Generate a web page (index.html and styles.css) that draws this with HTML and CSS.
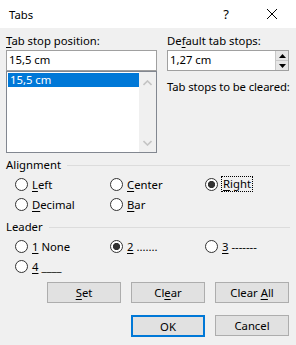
FILE: index.html
```html
<!DOCTYPE html>
<html>
<head>
    <meta charset="UTF-8">
    <title>Tabs</title>
    <link rel="stylesheet" href="styles.css">
</head>
<body>
    <div class="dialog">
        <div class="titlebar">
            <span class="title">Tabs</span>
            <span class="help">?</span>
            <svg class="close" width="12" height="12" viewBox="0 0 12 12">
                <path d="M1 1 L11 11 M11 1 L1 11" stroke="#000" stroke-width="1" fill="none"/>
            </svg>
        </div>
        <div class="content">
            <div class="top">
                <div class="col">
                    <div class="label"><u>T</u>ab stop position:</div>
                    <div class="field">15,5 cm</div>
                    <div class="list">
                        <div class="list-items">
                            <div class="item selected">15,5 cm</div>
                        </div>
                        <div class="scrollbar">
                            <svg width="9" height="6" viewBox="0 0 9 6"><path d="M0.5 5 L4.5 1 L8.5 5" stroke="#c4c4c4" stroke-width="1.6" fill="none"/></svg>
                            <svg width="9" height="6" viewBox="0 0 9 6"><path d="M0.5 1 L4.5 5 L8.5 1" stroke="#c4c4c4" stroke-width="1.6" fill="none"/></svg>
                        </div>
                    </div>
                </div>
                <div class="col">
                    <div class="label">De<u>f</u>ault tab stops:</div>
                    <div class="field spin">
                        <span class="spin-text">1,27 cm</span>
                        <div class="spin-buttons">
                            <div class="spin-btn"><svg width="7" height="4" viewBox="0 0 7 4"><path d="M0 4 L3.5 0 L7 4 Z" fill="#000"/></svg></div>
                            <div class="spin-btn"><svg width="7" height="4" viewBox="0 0 7 4"><path d="M0 0 L3.5 4 L7 0 Z" fill="#000"/></svg></div>
                        </div>
                    </div>
                    <div class="label cleared">Tab stops to be cleared:</div>
                </div>
            </div>

            <div class="group-title">Alignment</div>
            <div class="radios">
                <div class="opt"><span class="radio"></span><u>L</u>eft</div>
                <div class="opt"><span class="radio"></span><u>C</u>enter</div>
                <div class="opt"><span class="radio checked"></span><span class="focus"><u>R</u>ight</span></div>
                <div class="opt"><span class="radio"></span><u>D</u>ecimal</div>
                <div class="opt"><span class="radio"></span><u>B</u>ar</div>
            </div>

            <div class="group-title leader">Leader</div>
            <div class="radios">
                <div class="opt"><span class="radio"></span><u>1</u>&nbsp;None</div>
                <div class="opt"><span class="radio checked"></span><u>2</u>&nbsp;.......</div>
                <div class="opt"><span class="radio"></span><u>3</u>&nbsp;-------</div>
                <div class="opt"><span class="radio"></span><u>4</u>&nbsp;____</div>
            </div>

            <div class="buttons">
                <button><u>S</u>et</button>
                <button>Cl<u>e</u>ar</button>
                <button>Clear <u>A</u>ll</button>
            </div>
            <div class="buttons last">
                <button class="default">OK</button>
                <button>Cancel</button>
            </div>
        </div>
    </div>
</body>
</html>
```

FILE: styles.css
```css
body {
    margin: 0;
    padding: 0;
    font-family: "Noto Sans", "Open Sans", sans-serif;
    font-size: 11.3px;
    color: #000;
}
u {
    text-decoration-thickness: 1px;
    text-underline-offset: 2px;
}
.dialog {
    width: 296px;
    height: 345px;
    background-color: #f0f0f0;
    overflow: hidden;
}
.titlebar {
    height: 28px;
    background-color: #fff;
    display: flex;
    align-items: center;
}
.title {
    margin-left: 9px;
    flex: 1;
}
.help {
    font-size: 13px;
    margin-right: 37px;
}
.close {
    margin-right: 18px;
}
.content {
    padding: 5px 7px 0 6px;
}
.top {
    display: grid;
    grid-template-columns: 151px 122px;
    column-gap: 10px;
}
.col {
    display: flex;
    flex-direction: column;
}
.label {
    line-height: 16px;
    height: 16px;
    margin-bottom: 1px;
    white-space: nowrap;
}
.field {
    height: 21px;
    box-sizing: border-box;
    background-color: #fff;
    border: 1px solid #a0a0a0;
    padding-left: 2px;
    line-height: 18px;
}
.list {
    height: 82px;
    box-sizing: border-box;
    border: 1px solid #828790;
    background-color: #fff;
    display: flex;
}
.list-items {
    flex: 1;
    padding: 1px 0 0 1px;
}
.item {
    height: 14px;
    line-height: 13px;
    padding-left: 2px;
}
.selected {
    background-color: #0078d7;
    color: #fff;
}
.scrollbar {
    width: 17px;
    background-color: #f0f0f0;
    display: flex;
    flex-direction: column;
    justify-content: space-between;
    align-items: center;
    padding: 8px 0 6px;
}
.spin {
    display: flex;
    padding-right: 0;
}
.spin-text {
    flex: 1;
}
.spin-buttons {
    width: 12px;
    display: flex;
    flex-direction: column;
    border-left: 1px solid #c8c8c8;
}
.spin-btn {
    flex: 1;
    display: flex;
    align-items: center;
    justify-content: center;
    background-color: #e6e6e6;
}
.spin-btn + .spin-btn {
    border-top: 1px solid #c8c8c8;
}
.cleared {
    margin-top: 8px;
    letter-spacing: -0.1px;
}
.group-title {
    margin-top: 4px;
    line-height: 16px;
    display: flex;
    align-items: center;
}
.group-title::after {
    content: "";
    flex: 1;
    height: 1px;
    background-color: #dcdcdc;
    margin-left: 6px;
    margin-right: -1px;
}
.leader {
    margin-top: 5px;
}
.radios {
    display: grid;
    grid-template-columns: 95px 95px 80px;
    padding-left: 9px;
    margin-top: 1px;
}
.opt {
    height: 20px;
    display: flex;
    align-items: center;
}
.radio {
    width: 13px;
    height: 13px;
    box-sizing: border-box;
    border: 1px solid #333;
    border-radius: 50%;
    background-color: #fff;
    margin-right: 4px;
}
.radio.checked {
    background: radial-gradient(circle, #333 3.3px, #fff 3.9px);
}
.focus {
    outline: 1px dotted #000;
    outline-offset: 0;
    padding: 0 1px;
    line-height: 14px;
}
.buttons {
    display: flex;
    justify-content: flex-end;
    gap: 10px;
    margin-top: 6px;
}
.buttons.last {
    margin-top: 12px;
}
button {
    width: 74px;
    height: 21px;
    box-sizing: border-box;
    background-color: #e1e1e1;
    border: 1px solid #adadad;
    font-family: inherit;
    font-size: 11.3px;
    color: #000;
    padding: 0;
}
button.default {
    border: 2px solid #0078d7;
    height: 22px;
}
```
